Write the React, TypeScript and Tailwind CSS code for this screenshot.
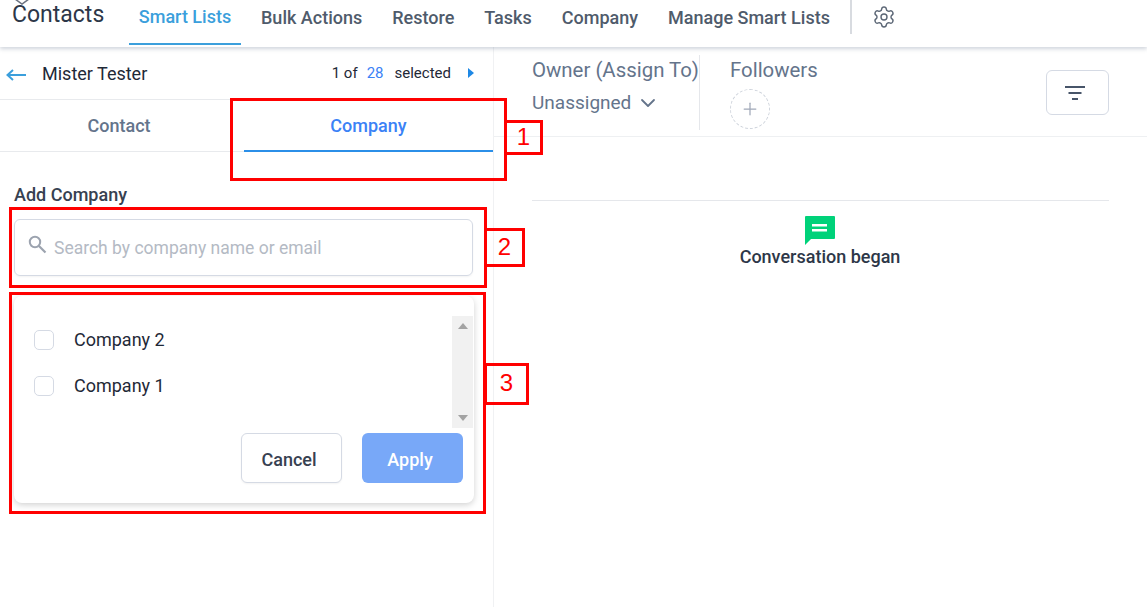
import { Settings, ChevronDown, Plus } from 'lucide-react';

const navItems = ['Bulk Actions', 'Restore', 'Tasks', 'Company', 'Manage Smart Lists'];

function Callout({ box, label, num }: { box: string; label: string; num: string }) {
  return (
    <>
      <div className={`absolute border-[3px] border-[#ff0000] ${box}`} />
      <div
        className={`absolute flex items-center justify-center border-[3px] border-[#ff0000] pb-[2px] font-['Liberation_Sans',sans-serif] text-[24px] leading-none text-[#ff0000] ${label}`}
      >
        {num}
      </div>
    </>
  );
}

function CompanyRow({ name }: { name: string }) {
  return (
    <div className="flex h-[46px] items-center pl-5">
      <span className="h-5 w-5 rounded-[5px] border border-[#d5dae4] bg-white" />
      <span className="ml-5 pb-[2px] text-[18px] text-[#1f2937]">{name}</span>
    </div>
  );
}

export default function App() {
  return (
    <div className="relative h-[607px] w-[1147px] overflow-hidden bg-white font-['Roboto',sans-serif]">
      <header className="relative z-10 flex h-[47px] items-start bg-white shadow-[0_2px_4px_rgba(100,116,139,0.3)]">
        <div className="relative w-[129px] pl-3 text-[23px] leading-[29px] text-[#2d3748]">
          <svg className="absolute left-[14px] top-[-3px]" width="16" height="8" viewBox="0 0 16 8" fill="none">
            <path d="M1 2l7 5 7-5" stroke="#6b7280" strokeWidth="1.5" />
          </svg>
          Contacts
        </div>
        <div className="flex h-[45px] w-[112px] items-center justify-center border-b-2 border-[#3b9fdc] pb-[10px] text-[18px] font-medium text-[#3b9fdc]">
          Smart Lists
        </div>
        <nav className="ml-5 flex h-[34px] items-center gap-[30px] text-[18px] font-medium text-[#4f5b6b]">
          {navItems.map((item) => (
            <span key={item}>{item}</span>
          ))}
        </nav>
        <div className="ml-5 h-[34px] w-[2px] bg-[#d8dbe0]" />
        <Settings className="ml-5 mt-[5px] text-[#5b6675]" size={24} strokeWidth={1.4} />
      </header>

      <div className="flex h-[560px]">
        <aside className="w-[494px] border-r border-[#f0f1f3]">
          <div className="flex h-[53px] items-center border-b border-[#e8eaed] pl-[6px] pr-[19px]">
            <svg width="21" height="12" viewBox="0 0 21 12" fill="none" className="mt-[3px]">
              <path d="M20 6H2M7 1L1.5 6 7 11" stroke="#3b9fdc" strokeWidth="2" />
            </svg>
            <span className="ml-[15px] text-[18px] text-[#1f2937]">Mister Tester</span>
            <span className="ml-auto text-[15px] text-[#1f2937]">1 of</span>
            <span className="ml-[9px] text-[15px] text-[#3b82f6]">28</span>
            <span className="ml-[11px] text-[15px] text-[#1f2937]">selected</span>
            <span className="ml-[17px] h-0 w-0 border-y-[5px] border-l-[6px] border-y-transparent border-l-[#1e88e5]" />
          </div>
          <div className="flex h-[52px] border-b border-[#e8eaed]">
            <div className="flex w-[244px] items-center justify-center pr-[6px] text-[18px] font-medium text-[#64748b]">
              Contact
            </div>
            <div className="-mb-px flex w-[249px] items-center justify-center border-b-2 border-[#2b8fe8] text-[18px] font-medium text-[#3b82f6]">
              Company
            </div>
          </div>
          <div className="pl-[14px] pr-[20px] pt-[33px]">
            <div className="text-[18px] font-medium leading-5 text-[#374151]">Add Company</div>
            <div className="mt-[14px] flex h-[57px] items-center rounded-[6px] border border-[#d5dae4] pl-[13px] shadow-[0_1px_2px_rgba(0,0,0,0.05)]">
              <svg className="mb-[7px]" width="19" height="19" viewBox="0 0 19 19" fill="none">
                <circle cx="7" cy="7" r="5.2" stroke="#9ca3af" strokeWidth="2" />
                <path d="M11 11l6.5 6.5" stroke="#9ca3af" strokeWidth="2.2" />
              </svg>
              <span className="ml-[7px] mt-[1px] text-[17.5px] text-[#b4bac4]">Search by company name or email</span>
            </div>
            <div className="mt-5 h-[207px] w-[460px] rounded-[8px] bg-white shadow-[0_2px_6px_rgba(0,0,0,0.18)]">
              <div className="flex h-[112px] translate-y-5 justify-between pr-px">
                <div className="pt-[1px]">
                  <CompanyRow name="Company 2" />
                  <CompanyRow name="Company 1" />
                </div>
                <div className="flex w-[21px] flex-col items-center justify-between bg-[#f1f1f1] py-[7px]">
                  <span className="h-0 w-0 border-x-[5.5px] border-b-[6px] border-x-transparent border-b-[#a3a3a3]" />
                  <span className="h-0 w-0 border-x-[5.5px] border-t-[6px] border-x-transparent border-t-[#a3a3a3]" />
                </div>
              </div>
              <div className="mt-[25px] flex justify-end gap-5 pr-[11px]">
                <button className="h-[50px] w-[101px] rounded-[6px] border border-[#d5dae4] bg-white pr-[5px] pt-[2px] text-[18px] font-medium text-[#374151] shadow-[0_1px_2px_rgba(0,0,0,0.05)]">
                  Cancel
                </button>
                <button className="h-[50px] w-[101px] rounded-[6px] bg-[#78a8f8] pr-[5px] pt-[2px] text-[18px] font-medium text-white">
                  Apply
                </button>
              </div>
            </div>
          </div>
        </aside>

        <main className="flex-1">
          <div className="flex h-[90px] border-b border-[#eef0f2]">
            <div className="w-[205px] pl-[38px] pt-[11px]">
              <div className="whitespace-nowrap text-[20.4px] leading-6 text-[#64748b]">Owner (Assign To)</div>
              <div className="mt-[9px] flex items-center text-[19px] leading-6 text-[#64748b]">
                Unassigned
                <ChevronDown className="ml-[5px]" size={24} strokeWidth={1.8} />
              </div>
            </div>
            <div className="mt-[8px] h-[75px] w-px bg-[#e5e7eb]" />
            <div className="pl-[30px] pt-[11px]">
              <div className="text-[20.4px] leading-6 text-[#64748b]">Followers</div>
              <div className="mt-[7px] flex h-10 w-10 items-center justify-center rounded-full border border-dashed border-[#cfd4dc]">
                <Plus className="text-[#a0a8b8]" size={20} strokeWidth={1.5} />
              </div>
            </div>
            <div className="ml-auto mr-[38px] mt-[23px] flex h-[45px] w-[63px] items-center justify-center rounded-[6px] border border-[#d5dae4] pr-[5px]">
              <svg width="22" height="16" viewBox="0 0 22 16" fill="none">
                <path d="M1 2h20M4.5 8h13M8 14h6" stroke="#475569" strokeWidth="2" />
              </svg>
            </div>
          </div>
          <div className="mx-[38px] mt-[63px] flex flex-col items-center border-t border-[#e5e7eb] pr-px pt-[15px]">
            <svg width="30" height="30" viewBox="0 0 30 30">
              <path d="M1 0h28a1 1 0 011 1v21a1 1 0 01-1 1H6l-6 6V1a1 1 0 011-1z" fill="#00d27a" />
              <path d="M7 8h15v2.5H7zM7 13h15v2.5H7z" fill="#fff" />
            </svg>
            <div className="-mt-px text-[18px] font-medium leading-6 text-[#2d3748]">Conversation began</div>
          </div>
        </main>
      </div>

      <Callout box="left-[230px] top-[98px] h-[83px] w-[277px]" label="left-[504px] top-[120px] h-[35px] w-[39px]" num="1" />
      <Callout box="left-[9px] top-[207px] h-[81px] w-[478px]" label="left-[484px] top-[228px] h-[39px] w-[41px]" num="2" />
      <Callout box="left-[9px] top-[292px] h-[222px] w-[477px]" label="left-[484px] top-[363px] h-[42px] w-[45px]" num="3" />
    </div>
  );
}
